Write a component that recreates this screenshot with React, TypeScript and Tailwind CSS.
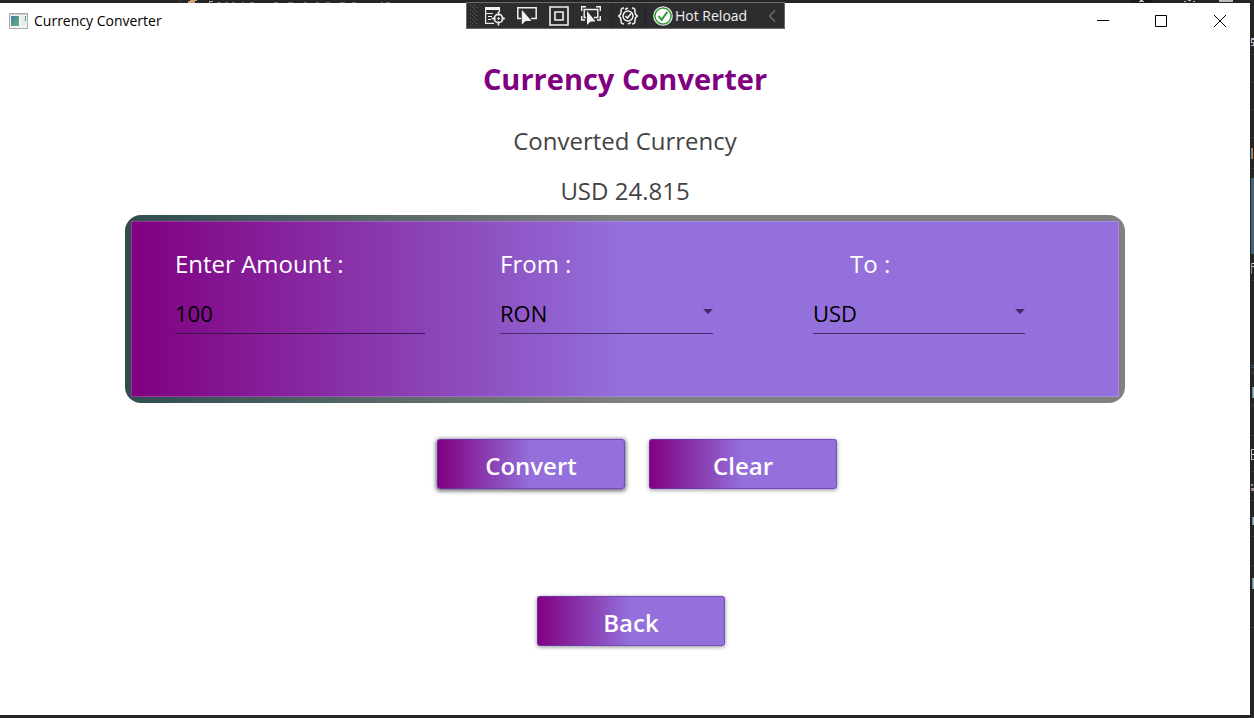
import { useState } from "react";
import type { ReactNode } from "react";

const currencies = ["RON", "USD", "EUR", "GBP", "CHF"];

function IconButton({ label, children }: { label: string; children: ReactNode }) {
  return (
    <button type="button" aria-label={label} className="flex h-6 w-8 items-center justify-center">
      {children}
    </button>
  );
}

function DebugToolbar() {
  return (
    <div className="absolute top-[2px] left-1/2 -ml-[161px] flex h-[27px] w-[319px] items-center border border-[#6a6a6e] bg-[#2d2d30] text-[#f1f1f1]">
      <svg width="10" height="22" viewBox="0 0 10 22" className="shrink-0" fill="#5c5c60" aria-hidden="true">
        {[1, 5, 9, 13, 17, 21].map((y) => (
          <g key={y}>
            <rect x="3" y={y - 1} width="1" height="1" />
            <rect x="7" y={y - 1} width="1" height="1" />
            <rect x="5" y={y + 1} width="1" height="1" />
            <rect x="9" y={y + 1} width="1" height="1" />
          </g>
        ))}
      </svg>
      <div className="flex pl-[2px]">
        <IconButton label="Go to Live Visual Tree">
          <svg width="20" height="20" viewBox="0 0 20 20" fill="none" stroke="currentColor">
            <path d="M0 1h15v3H0z" fill="currentColor" stroke="none" />
            <path d="M.6 2v15.500M14.500 3v3M0 7.500h8M3 10.500h4M3 13.500h3M0 17.400h9" strokeWidth="1.200" />
            <circle cx="13.500" cy="12.500" r="4.200" strokeWidth="1.700" />
            <path d="M13.500 5.500v4M13.500 15.500v4M6.500 12.500h4M16.500 12.500h3.500" strokeWidth="1.500" />
            <path d="M13.500 11l1.500 1.500-1.500 1.500-1.500-1.500z" fill="currentColor" stroke="none" />
          </svg>
        </IconButton>
        <IconButton label="Select Element">
          <svg width="20" height="20" viewBox="0 0 20 20" fill="none" stroke="currentColor">
            <path d="M4 12.500H.8V1.800h18.400v10.700H14" strokeWidth="1.500" />
            <path d="M4.800 3.800v14.800l3.900-3.500h5.800z" fill="currentColor" stroke="none" />
          </svg>
        </IconButton>
        <IconButton label="Display Layout Adorners">
          <svg width="20" height="20" viewBox="0 0 20 20" fill="none" stroke="currentColor" strokeWidth="1.600">
            <path d="M1 1h18v18H1zM6 6h8v8H6z" />
          </svg>
        </IconButton>
        <IconButton label="Track Focused Element">
          <svg width="20" height="20" viewBox="0 0 20 20" fill="none" stroke="currentColor" strokeWidth="1.400">
            <path d="M.7 5V.8H5M15 .8h4.300V5M.7 10v4H4M19.300 10v4H16" />
            <path d="M5 11.500H3.200v-8h13.600v8H13" />
            <path d="M6 5v14l3.600-3.600h5z" fill="currentColor" stroke="none" />
          </svg>
        </IconButton>
      </div>
      <div className="ml-1 flex h-6 w-[34px] items-center border-l border-[#222224]">
        <IconButton label="Binding Failures">
          <svg width="20" height="18" viewBox="0 0 20 18" fill="none" stroke="currentColor" strokeWidth="1.500">
            <path d="M6 1C3 1 3 2.500 3 5S2.500 8 .8 9C2.500 10 3 10.500 3 13s0 4 3 4M14 1c3 0 3 1.500 3 4s.5 3 2.200 4c-1.700 1-2.200 1.500-2.200 4s0 4-3 4" />
            <circle cx="10" cy="9" r="5" />
            <path d="M7.500 9l2 2 3.500-4.500M7 2.500l3-1.500M10 17l3-1.500" />
          </svg>
        </IconButton>
      </div>
      <button type="button" className="flex h-6 items-center gap-[2px] border-l border-[#222224] pl-[7px] font-['Open_Sans',sans-serif] text-sm">
        <svg width="20" height="20" viewBox="0 0 20 20" aria-hidden="true">
          <circle cx="10" cy="10" r="9.800" fill="#f4f4f4" />
          <circle cx="10" cy="10" r="8" fill="#fff" stroke="#339933" strokeWidth="1.500" />
          <path d="M5.500 10.200l3.200 3.600 5.600-8" fill="none" stroke="#339933" strokeWidth="2" />
        </svg>
        <span className="whitespace-nowrap">Hot Reload</span>
      </button>
      <button type="button" aria-label="Collapse toolbar" className="mr-2 ml-auto text-[#77777b]">
        <svg width="8" height="12" viewBox="0 0 8 12" fill="none" stroke="currentColor" strokeWidth="1.200">
          <path d="M7 .5L1.500 6 7 11.500" />
        </svg>
      </button>
    </div>
  );
}

function TitleBar() {
  return (
    <header className="flex h-9 items-center justify-between pl-[9px]">
      <div className="flex items-center gap-[6px]">
        <svg width="19" height="16" viewBox="0 0 19 16" aria-hidden="true">
          <defs>
            <linearGradient id="app-icon" x1="0" y1="0" x2="1" y2="1">
              <stop offset="0" stopColor="#4a78a0" />
              <stop offset="1" stopColor="#5cb878" />
            </linearGradient>
          </defs>
          <rect x=".5" y=".5" width="18" height="15" fill="#f5f5f6" stroke="#a5a8ad" />
          <path d="M1 1.500h17" stroke="#c9ccd0" />
          <rect x="2" y="3" width="8" height="10" fill="url(#app-icon)" />
          <rect x="12" y="3" width="5" height="10" fill="#e6eaec" />
          <path d="M16.500 3v5" stroke="#4f9c8c" />
        </svg>
        <span className="text-sm">Currency Converter</span>
      </div>
      <div className="flex">
        <button type="button" aria-label="Minimize" className="flex h-9 w-[59px] items-center justify-center">
          <svg width="12" height="12" viewBox="0 0 12 12" stroke="#000"><path d="M0 5.500h12" /></svg>
        </button>
        <button type="button" aria-label="Maximize" className="flex h-9 w-[58px] items-center justify-center">
          <svg width="12" height="12" viewBox="0 0 12 12" fill="none" stroke="#000"><path d="M.5.5h11v11H.5z" /></svg>
        </button>
        <button type="button" aria-label="Close" className="flex h-9 w-[60px] items-center justify-center">
          <svg width="12" height="12" viewBox="0 0 12 12" stroke="#000"><path d="M0 0l12 12M12 0L0 12" /></svg>
        </button>
      </div>
    </header>
  );
}

type CurrencySelectProps = { id: string; value: string; onChange: (value: string) => void };

function CurrencySelect({ id, value, onChange }: CurrencySelectProps) {
  return (
    <div className="relative">
      <select
        id={id}
        value={value}
        onChange={(e) => onChange(e.target.value)}
        className="block h-10 w-full appearance-none border-b border-[#432d68] bg-transparent text-[22px] text-black outline-none"
      >
        {currencies.map((c) => (
          <option key={c}>{c}</option>
        ))}
      </select>
      <svg width="10" height="5" viewBox="0 0 10 5" className="pointer-events-none absolute top-[15px] right-0" fill="#432d68" aria-hidden="true">
        <path d="M0 0h10L5 5z" />
      </svg>
    </div>
  );
}

function ActionButton({ children, focused = false, onClick }: { children: ReactNode; focused?: boolean; onClick?: () => void }) {
  const shadow = focused ? "shadow-[0_1px_4px_1px_rgba(0,0,0,0.6)]" : "shadow-[0_1px_4px_rgba(0,0,0,0.45)]";
  return (
    <button
      type="button"
      onClick={onClick}
      className={`h-[50px] w-[188px] rounded-[3px] border border-[#673ab7]/70 bg-[linear-gradient(90deg,#800080,#9370db_50%)] bg-origin-border pt-1 text-2xl leading-8 font-semibold text-white ${shadow}`}
    >
      {children}
    </button>
  );
}

/* Sliver of the code editor visible behind the window's right edge. */
function EditorEdge() {
  return (
    <svg width="4" height="718" viewBox="0 0 4 718" className="absolute top-0 right-0" aria-hidden="true">
      <path d="M1 54.500h3M1 82.500h3M1 109.500h3M1 137.500h3M1 168.500h3M1 280.500h3M1 435.500h3M1 471.500h3M1 500.500h3M1 536.500h3M1 565.500h3M1 627.500h3" stroke="#3a3a3c" />
      <path d="M1 178h3v76H1z" fill="#42657c" />
      <path d="M1 365.500h3M1 367.500h3" stroke="#3f5662" />
      <path d="M1 371h3v4H1zM1 404h3v3H1z" fill="#333338" />
      <path d="M1 38h3v2H2v2h2v4H1v-1h2v-2H1z" fill="#b9bcc4" />
      <path d="M1 148h1v11H1z" fill="#4e86a8" />
      <path d="M2 148h1v11H2z" fill="#d98038" />
      <path d="M1 263h1v11H1z" fill="#8a8f80" />
      <path d="M2 263h2v1H2zM2 266h2v1H2z" fill="#d8d8cc" />
      <path d="M2 387h1v11H2z" fill="#3f8fd0" />
      <path d="M3 387h1v11H3z" fill="#d0b080" />
      <path d="M1 449h3v1H2v4h2v1H2v4h2v1H1z" fill="#c0c0c0" />
      <path d="M1 484h2v2H1zM1 488h3v3H1z" fill="#9a8c8c" />
      <path d="M2 517h1v8H2zM2 578h1v11H2z" fill="#4a90d0" />
      <path d="M3 517h1v8H3zM3 578h1v11H3z" fill="#cdb888" />
    </svg>
  );
}

/* Bits of the editor's own toolbar that show above the window. */
function EditorTop() {
  return (
    <div className="absolute inset-x-0 top-0 flex h-[3px] overflow-hidden" aria-hidden="true">
      <svg width="240" height="3" viewBox="0 0 240 3" className="ml-[176px]">
        <path d="M2 0v3M5 0v3" stroke="#3e3e42" />
        <path d="M14 0h7v1h-2v2h-7V1h2z" fill="#c8a26a" />
        <path d="M33 1h4v1h-3v1h-1z" fill="#aaa" />
        <path d="M41 2.500h4M49 2.500h3M56 2.500h3M66 2.500h2M74 2.500h4M98 2.500h4M112 2.500h5M128 2.500h3M140 2.500h3M150 2.500h4M164 2.500h5M176 2.500h4M205 2.500h2M210 2.500h4" stroke="#66666a" />
      </svg>
      <svg width="120" height="3" viewBox="0 0 120 3" className="mr-5 ml-auto">
        <path d="M16 0h23v3H16z" fill="#1b1b1c" />
        <path d="M26 0h3v1h1v1h-5V1h1zM70 1h2v1h-2zM74 0h3v1h-3zM79 1h2v1h-2zM105 0h14v2h-14z" fill="#bbb" />
      </svg>
    </div>
  );
}

export default function App() {
  const [amount, setAmount] = useState("100");
  const [from, setFrom] = useState("RON");
  const [to, setTo] = useState("USD");
  const [result, setResult] = useState("USD 24.815");

  const clear = () => {
    setAmount("");
    setResult("");
  };

  return (
    <div className="relative flex min-h-screen flex-col bg-[#252526] pt-[3px] pr-1 pb-[3px] font-['Open_Sans','Noto_Sans',sans-serif]">
      <EditorTop />
      <div className="flex grow flex-col bg-white text-black">
        <TitleBar />
        <main className="px-[10%]">
          <div className="flex flex-col items-center text-center">
            <h1 className="pt-5 text-[29px] leading-10 font-bold text-[#800080]">Currency Converter</h1>
            <h2 className="pt-6 text-2xl leading-9 text-[#444]">Converted Currency</h2>
            <p className="h-[56px] pt-[14px] text-2xl leading-9 text-[#444]">{result}</p>
          </div>

          <form
            onSubmit={(e) => e.preventDefault()}
            className="rounded-2xl bg-[linear-gradient(90deg,#2f4f4f,#808080_50%)] p-[6px]"
          >
            <div className="grid h-[176px] grid-cols-[325fr_313fr_212fr] border border-white/20 bg-[linear-gradient(90deg,#800080,#9370db_50%)] bg-origin-border pt-6 pr-[93px] pl-[43px]">
              <div className="pr-[75px]">
                <label htmlFor="amount" className="block pb-3 text-2xl leading-9 text-white">Enter Amount :</label>
                <input
                  id="amount"
                  type="text"
                  value={amount}
                  onChange={(e) => setAmount(e.target.value)}
                  className="block h-10 w-full border-b border-[#3c1450] bg-transparent pb-[2px] text-[22px] text-black outline-none"
                />
              </div>
              <div className="pr-[100px]">
                <label htmlFor="from" className="block pb-3 text-2xl leading-9 text-white">From :</label>
                <CurrencySelect id="from" value={from} onChange={setFrom} />
              </div>
              <div>
                <label htmlFor="to" className="block pb-3 pl-[37px] text-2xl leading-9 text-white">To :</label>
                <CurrencySelect id="to" value={to} onChange={setTo} />
              </div>
            </div>
          </form>

          <div className="flex justify-center gap-6 pt-9 pl-6">
            <ActionButton focused>Convert</ActionButton>
            <ActionButton onClick={clear}>Clear</ActionButton>
          </div>
          <div className="flex justify-center pt-[107px] pl-3">
            <ActionButton>Back</ActionButton>
          </div>
        </main>
      </div>
      <EditorEdge />
      <DebugToolbar />
    </div>
  );
}
